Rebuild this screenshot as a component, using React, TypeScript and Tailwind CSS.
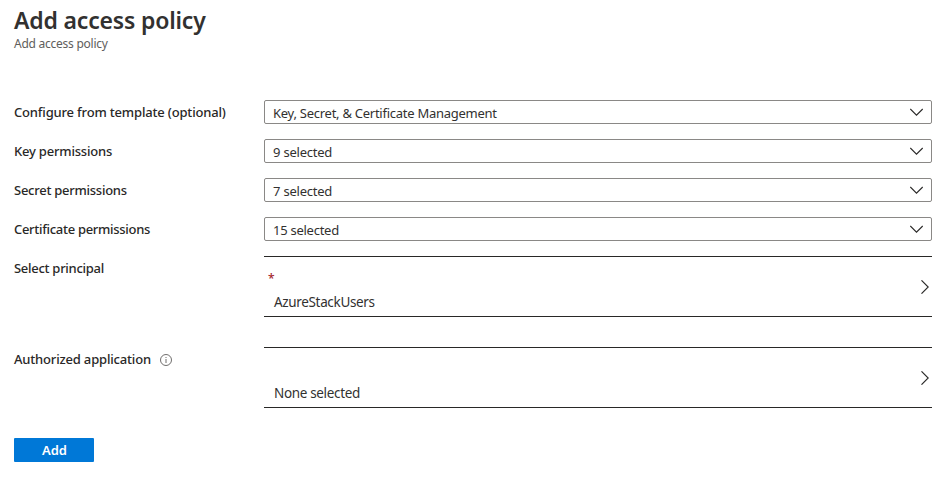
import React from "react";

type Row = { label: string; value: string; labelTracking: string; valueTracking: string };

const rows: Row[] = [
  { label: "Configure from template (optional)", value: "Key, Secret, & Certificate Management", labelTracking: "tracking-[-0.17px]", valueTracking: "tracking-[-0.26px]" },
  { label: "Key permissions", value: "9 selected", labelTracking: "tracking-[-0.2px]", valueTracking: "tracking-[-0.22px]" },
  { label: "Secret permissions", value: "7 selected", labelTracking: "tracking-[-0.26px]", valueTracking: "tracking-[-0.22px]" },
  { label: "Certificate permissions", value: "15 selected", labelTracking: "tracking-[-0.3px]", valueTracking: "tracking-[-0.26px]" },
];

function ChevronDown() {
  return (
    <svg width="14" height="8" viewBox="0 0 14 8" fill="none" stroke="#292827" strokeWidth="1.1">
      <path d="M0.3 1L6.5 7.2L12.7 1" />
    </svg>
  );
}

function ChevronRight() {
  return (
    <svg width="8" height="14" viewBox="0 0 8 14" fill="none" stroke="#292827" strokeWidth="1.1">
      <path d="M0.5 0.3L7.2 7L0.5 13.7" />
    </svg>
  );
}

function InfoIcon() {
  return (
    <svg width="12" height="12" viewBox="0 0 12 12" fill="none" stroke="#605e5c" strokeWidth="0.9">
      <circle cx="6" cy="6" r="5.5" />
      <path d="M6 5V9M6 3V4" />
    </svg>
  );
}

const labelClass = "flex h-6 w-[250px] shrink-0 items-center whitespace-nowrap pt-[2px] text-[13px] font-medium text-[#292827]";

export default function App() {
  return (
    <main className="h-[477px] w-[948px] bg-white pl-[14px] pr-4 pt-1 font-['Noto_Sans','Open_Sans',sans-serif] text-[13px] text-[#323130]">
      <h1 className="h-8 whitespace-nowrap text-[23px] font-semibold leading-8 text-[#323130]">
        <span className="tracking-[-0.18px]">Add access policy</span>
      </h1>
      <p className="h-4 text-[12px] leading-4 text-[#605e5c]">
        <span className="tracking-[-0.25px]">Add access policy</span>
      </p>

      <form className="mt-12" onSubmit={(e) => e.preventDefault()}>
        <div className="flex flex-col gap-[15px]">
          {rows.map((r) => (
            <div key={r.label} className="flex">
              <label className={labelClass}>
                <span className={r.labelTracking}>{r.label}</span>
              </label>
              <div className="flex h-6 flex-1 items-center justify-between rounded-[2px] border border-[#8a8886] pl-2 pr-[7px]">
                <span className={`pt-px leading-5 ${r.valueTracking}`}>{r.value}</span>
                <ChevronDown />
              </div>
            </div>
          ))}
        </div>

        <div className="mt-[15px] flex">
          <label className={labelClass}>
            <span className="tracking-[-0.28px]">Select principal</span>
          </label>
          <div className="flex h-[61px] flex-1 items-center justify-between border-y border-[#292827] pr-[3px]">
            <div className="flex flex-col pl-1">
              <span className="mt-[7px] h-6 text-[12px] font-medium leading-[22px] text-[#a4262c]">*</span>
              <span className="pl-1.5 text-[13.5px] leading-5 tracking-[-0.34px]">AzureStackUsers</span>
            </div>
            <ChevronRight />
          </div>
        </div>

        <div className="mt-[30px] flex">
          <label className={labelClass}>
            <span className="tracking-[-0.18px]">Authorized application</span>
            <span className="ml-[9px]"><InfoIcon /></span>
          </label>
          <div className="flex h-[61px] flex-1 items-center justify-between border-y border-[#292827] pr-[3px]">
            <span className="pl-2.5 pt-[30px] text-[13.5px] leading-5 tracking-[-0.34px]">None selected</span>
            <ChevronRight />
          </div>
        </div>

        <button className="mt-[30px] flex h-6 w-20 items-center justify-center rounded-[1px] bg-[#0078d7] pl-px pt-[2px] text-[13px] font-semibold text-white">
          <span>Add</span>
        </button>
      </form>
    </main>
  );
}
